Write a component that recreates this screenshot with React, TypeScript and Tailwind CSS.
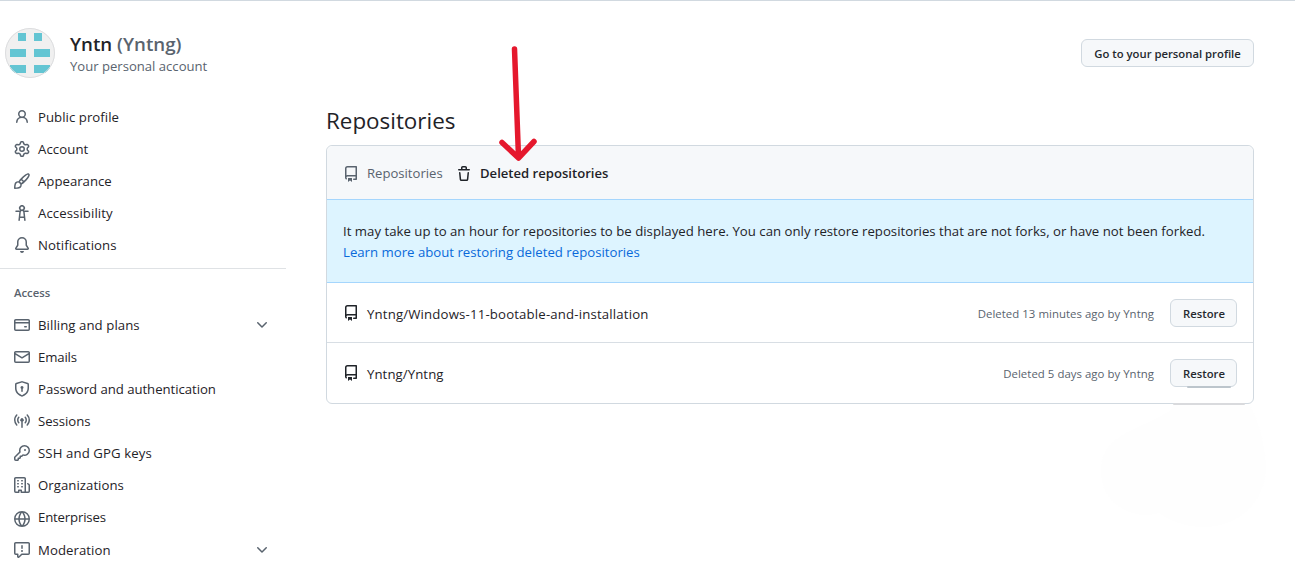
import type { ReactNode } from "react";

const ICONS = {
  person: "M10.561 8.073a6.005 6.005 0 0 1 3.432 5.142.75.75 0 1 1-1.498.07 4.5 4.5 0 0 0-8.99 0 .75.75 0 0 1-1.498-.07 6.004 6.004 0 0 1 3.431-5.142 3.999 3.999 0 1 1 5.123 0ZM10.5 5a2.5 2.5 0 1 0-5 0 2.5 2.5 0 0 0 5 0Z",
  gear: "M8 0a8.2 8.2 0 0 1 .701.031C9.444.095 9.99.645 10.16 1.29l.288 1.107c.018.066.079.158.212.224.231.114.454.243.668.386.123.082.233.09.299.071l1.103-.303c.644-.176 1.392.021 1.82.63.27.385.506.792.704 1.218.315.675.111 1.422-.364 1.891l-.814.806c-.049.048-.098.147-.088.294.016.257.016.515 0 .772-.01.147.038.246.088.294l.814.806c.475.469.679 1.216.364 1.891a7.977 7.977 0 0 1-.704 1.217c-.428.61-1.176.807-1.82.63l-1.102-.302c-.067-.019-.177-.011-.3.071a5.909 5.909 0 0 1-.668.386c-.133.066-.194.158-.211.224l-.29 1.106c-.168.646-.715 1.196-1.458 1.26a8.006 8.006 0 0 1-1.402 0c-.743-.064-1.289-.614-1.458-1.26l-.289-1.106c-.018-.066-.079-.158-.212-.224a5.738 5.738 0 0 1-.668-.386c-.123-.082-.233-.09-.299-.071l-1.103.303c-.644.176-1.392-.021-1.82-.63a8.12 8.12 0 0 1-.704-1.218c-.315-.675-.111-1.422.363-1.891l.815-.806c.05-.048.098-.147.088-.294a6.214 6.214 0 0 1 0-.772c.01-.147-.038-.246-.088-.294l-.815-.806C.635 6.045.431 5.298.746 4.623a7.92 7.92 0 0 1 .704-1.217c.428-.61 1.176-.807 1.82-.63l1.102.302c.067.019.177.011.3-.071.214-.143.437-.272.668-.386.133-.066.194-.158.211-.224l.29-1.106C6.009.645 6.556.095 7.299.03 7.53.01 7.764 0 8 0Zm-.571 1.525c-.036.003-.108.036-.137.146l-.289 1.105c-.147.561-.549.967-.998 1.189-.173.086-.34.183-.5.29-.417.278-.97.423-1.529.27l-1.103-.303c-.109-.03-.175.016-.195.045-.22.312-.412.644-.573.99-.014.031-.021.11.059.19l.815.806c.411.406.562.957.53 1.456a4.709 4.709 0 0 0 0 .582c.032.499-.119 1.05-.53 1.456l-.815.806c-.081.08-.073.159-.059.19.162.346.353.677.573.989.02.03.085.076.195.046l1.102-.303c.56-.153 1.113-.008 1.53.27.161.107.328.204.501.29.447.222.85.629.997 1.189l.289 1.105c.029.109.101.143.137.146a6.6 6.6 0 0 0 1.142 0c.036-.003.108-.036.137-.146l.289-1.105c.147-.561.549-.967.998-1.189.173-.086.34-.183.5-.29.417-.278.97-.423 1.529-.27l1.103.303c.109.029.175-.016.195-.045.22-.313.411-.644.573-.99.014-.031.021-.11-.059-.19l-.815-.806c-.411-.406-.562-.957-.53-1.456a4.709 4.709 0 0 0 0-.582c-.032-.499.119-1.05.53-1.456l.815-.806c.081-.08.073-.159.059-.19a6.464 6.464 0 0 0-.573-.989c-.02-.03-.085-.076-.195-.046l-1.102.303c-.56.153-1.113.008-1.53-.27a4.44 4.44 0 0 0-.501-.29c-.447-.222-.85-.629-.997-1.189l-.289-1.105c-.029-.11-.101-.143-.137-.146a6.6 6.6 0 0 0-1.142 0ZM11 8a3 3 0 1 1-6 0 3 3 0 0 1 6 0ZM9.5 8a1.5 1.5 0 1 0-3.001.001A1.5 1.5 0 0 0 9.5 8Z",
  brush: "M11.134 1.535c.7-.509 1.416-.942 2.076-1.155.649-.21 1.463-.267 2.069.34.603.601.568 1.411.368 2.07-.202.668-.624 1.39-1.125 2.096-1.011 1.424-2.496 2.987-3.775 4.249-1.098 1.084-2.132 1.839-3.04 2.3a3.744 3.744 0 0 1-1.055 3.217c-.431.431-1.065.691-1.657.861-.614.177-1.294.287-1.914.357A21.151 21.151 0 0 1 .797 16H.743l.007-.75H.749L.742 16a.75.75 0 0 1-.743-.742l.743-.008-.742.007v-.054a21.25 21.25 0 0 1 .13-2.284c.067-.647.187-1.287.358-1.914.17-.591.43-1.226.86-1.657a3.746 3.746 0 0 1 3.227-1.054c.466-.893 1.225-1.907 2.314-2.982 1.271-1.255 2.833-2.75 4.245-3.777ZM1.62 13.089c-.051.464-.086.929-.104 1.395.466-.018.932-.053 1.396-.104a10.511 10.511 0 0 0 1.668-.309c.526-.151.856-.325 1.011-.48a2.25 2.25 0 1 0-3.182-3.182c-.155.155-.329.485-.48 1.01a10.515 10.515 0 0 0-.309 1.67Zm10.396-10.34c-1.224.89-2.605 2.189-3.822 3.384l1.718 1.718c1.21-1.205 2.51-2.597 3.387-3.833.47-.662.78-1.227.912-1.662.134-.444.032-.551.009-.575h-.001V1.78c-.014-.014-.113-.113-.548.027-.432.14-.995.462-1.655.942Zm-4.832 7.266-.001.001a9.859 9.859 0 0 0 1.63-1.142L7.155 7.216a9.7 9.7 0 0 0-1.161 1.607c.482.302.889.71 1.19 1.192Z",
  accessibility: "M9.923 5.302c.063.063.122.129.178.198H14A.75.75 0 0 1 14 7h-3.3l.578 5.163.362 2.997a.75.75 0 0 1-1.49.18L9.868 13H6.132l-.282 2.34a.75.75 0 0 1-1.49-.18l.362-2.997L5.3 7H2a.75.75 0 0 1 0-1.5h3.9a2.54 2.54 0 0 1 .176-.198 3 3 0 1 1 3.847 0ZM9.2 7.073h-.001a1.206 1.206 0 0 0-2.398 0L6.305 11.5h3.39ZM9.5 3a1.5 1.5 0 1 0-3.001.001A1.5 1.5 0 0 0 9.5 3Z",
  bell: "M8 16a2 2 0 0 0 1.985-1.75c.017-.137-.097-.25-.235-.25h-3.5c-.138 0-.252.113-.235.25A2 2 0 0 0 8 16ZM3 5a5 5 0 0 1 10 0v2.947c0 .05.015.098.042.139l1.703 2.555A1.519 1.519 0 0 1 13.482 13H2.518a1.516 1.516 0 0 1-1.263-2.36l1.703-2.554A.255.255 0 0 0 3 7.947Zm5-3.5A3.5 3.5 0 0 0 4.5 5v2.947c0 .346-.102.683-.294.97l-1.703 2.556a.017.017 0 0 0-.003.01l.001.006c0 .002.002.004.004.006l.006.004.007.001h10.964l.007-.001.006-.004.004-.006.001-.007a.017.017 0 0 0-.003-.01l-1.703-2.554a1.745 1.745 0 0 1-.294-.97V5A3.5 3.5 0 0 0 8 1.5Z",
  card: "M10.75 9a.75.75 0 0 0 0 1.5h1.5a.75.75 0 0 0 0-1.5h-1.5ZM0 3.75C0 2.784.784 2 1.75 2h12.5c.966 0 1.75.784 1.75 1.75v8.5A1.75 1.75 0 0 1 14.25 14H1.75A1.75 1.75 0 0 1 0 12.25ZM14.5 6.5h-13v5.75c0 .138.112.25.25.25h12.5a.25.25 0 0 0 .25-.25Zm0-2.75a.25.25 0 0 0-.25-.25H1.75a.25.25 0 0 0-.25.25V5h13Z",
  mail: "M1.75 2h12.5c.966 0 1.75.784 1.75 1.75v8.5A1.75 1.75 0 0 1 14.25 14H1.75A1.75 1.75 0 0 1 0 12.25v-8.5C0 2.784.784 2 1.75 2ZM1.5 12.251c0 .138.112.25.25.25h12.5a.25.25 0 0 0 .25-.25V5.809L8.38 9.397a.75.75 0 0 1-.76 0L1.5 5.809v6.442Zm13-8.181v-.32a.25.25 0 0 0-.25-.25H1.75a.25.25 0 0 0-.25.25v.32L8 7.88Z",
  shield: "m8.533.133 5.25 1.68A1.75 1.75 0 0 1 15 3.48V7c0 1.566-.32 3.182-1.303 4.682-.983 1.498-2.585 2.813-5.032 3.855a1.697 1.697 0 0 1-1.33 0c-2.447-1.042-4.049-2.357-5.032-3.855C1.32 10.182 1 8.566 1 7V3.48a1.755 1.755 0 0 1 1.217-1.667l5.25-1.68a1.748 1.748 0 0 1 1.066 0Zm-.61 1.429.001.001-5.25 1.68a.251.251 0 0 0-.174.237V7c0 1.36.275 2.666 1.057 3.859.784 1.194 2.121 2.342 4.366 3.298a.196.196 0 0 0 .154 0c2.245-.957 3.582-2.103 4.366-3.297C13.225 9.666 13.5 8.358 13.5 7V3.48a.25.25 0 0 0-.174-.238l-5.25-1.68a.25.25 0 0 0-.153 0ZM9.5 6.5c0 .536-.286 1.032-.75 1.3v2.45a.75.75 0 0 1-1.5 0V7.8A1.5 1.5 0 1 1 9.5 6.5Z",
  broadcast: "M8.75 8.582v5.668a.75.75 0 0 1-1.5 0V8.582a1.75 1.75 0 1 1 1.5 0Zm3.983-7.125a.75.75 0 0 1 1.06.026A7.976 7.976 0 0 1 16 7c0 2.139-.84 4.083-2.207 5.517a.75.75 0 1 1-1.086-1.034A6.474 6.474 0 0 0 14.5 7a6.474 6.474 0 0 0-1.793-4.483.75.75 0 0 1 .026-1.06Zm-9.466 0c.3.286.312.76.026 1.06A6.474 6.474 0 0 0 1.5 7a6.47 6.47 0 0 0 1.793 4.483.75.75 0 0 1-1.086 1.034A7.973 7.973 0 0 1 0 7c0-2.139.84-4.083 2.207-5.517a.75.75 0 0 1 1.06-.026Zm8.556 2.321A4.988 4.988 0 0 1 13 7a4.988 4.988 0 0 1-1.177 3.222.75.75 0 1 1-1.146-.967A3.487 3.487 0 0 0 11.5 7c0-.86-.309-1.645-.823-2.255a.75.75 0 0 1 1.146-.967Zm-6.492.958A3.48 3.48 0 0 0 4.5 7a3.48 3.48 0 0 0 .823 2.255.75.75 0 0 1-1.146.967A4.981 4.981 0 0 1 3 7a4.982 4.982 0 0 1 1.188-3.236.75.75 0 1 1 1.143.972Z",
  key: "M10.5 0a5.499 5.499 0 1 1-1.288 10.848l-.932.932a.749.749 0 0 1-.53.22H7v.75a.749.749 0 0 1-.22.53l-.5.5a.749.749 0 0 1-.53.22H5v.75a.749.749 0 0 1-.22.53l-.5.5a.749.749 0 0 1-.53.22h-2A1.75 1.75 0 0 1 0 14.25v-2c0-.199.079-.389.22-.53l4.932-4.932A5.5 5.5 0 0 1 10.5 0Zm-4 5.5c-.001.431.069.86.205 1.269a.75.75 0 0 1-.181.768L1.5 12.56v1.69c0 .138.112.25.25.25h1.69l.06-.06v-1.19a.75.75 0 0 1 .75-.75h1.19l.06-.06v-1.19a.75.75 0 0 1 .75-.75h1.19l1.023-1.025a.75.75 0 0 1 .768-.18A4 4 0 1 0 6.5 5.5ZM11 6a1 1 0 1 1 0-2 1 1 0 0 1 0 2Z",
  org: "M1.75 16A1.75 1.75 0 0 1 0 14.25V1.75C0 .784.784 0 1.75 0h8.5C11.216 0 12 .784 12 1.75v12.5c0 .085-.006.168-.018.25h2.268a.25.25 0 0 0 .25-.25V8.285a.25.25 0 0 0-.111-.208l-1.055-.703a.749.749 0 1 1 .832-1.248l1.055.703c.487.325.779.871.779 1.456v5.965A1.75 1.75 0 0 1 14.25 16h-3.5a.766.766 0 0 1-.197-.026c-.099.017-.2.026-.303.026h-3a.75.75 0 0 1-.75-.75V14h-1v1.25a.75.75 0 0 1-.75.75Zm-.25-1.75c0 .138.112.25.25.25H4v-1.25a.75.75 0 0 1 .75-.75h2.5a.75.75 0 0 1 .75.75v1.25h2.25a.25.25 0 0 0 .25-.25V1.75a.25.25 0 0 0-.25-.25h-8.5a.25.25 0 0 0-.25.25ZM3.75 6h.5a.75.75 0 0 1 0 1.5h-.5a.75.75 0 0 1 0-1.5ZM3 3.75A.75.75 0 0 1 3.75 3h.5a.75.75 0 0 1 0 1.5h-.5A.75.75 0 0 1 3 3.75Zm4 3A.75.75 0 0 1 7.75 6h.5a.75.75 0 0 1 0 1.5h-.5A.75.75 0 0 1 7 6.75ZM7.75 3h.5a.75.75 0 0 1 0 1.5h-.5a.75.75 0 0 1 0-1.5ZM3 9.75A.75.75 0 0 1 3.75 9h.5a.75.75 0 0 1 0 1.5h-.5A.75.75 0 0 1 3 9.75ZM7.75 9h.5a.75.75 0 0 1 0 1.5h-.5a.75.75 0 0 1 0-1.5Z",
  globe: "M8 0a8 8 0 1 1 0 16A8 8 0 0 1 8 0ZM5.78 8.75a9.64 9.64 0 0 0 1.363 4.177c.255.426.542.832.857 1.215.245-.296.551-.705.857-1.215A9.64 9.64 0 0 0 10.22 8.75Zm4.44-1.5a9.64 9.64 0 0 0-1.363-4.177c-.307-.51-.612-.919-.857-1.215a9.927 9.927 0 0 0-.857 1.215A9.64 9.64 0 0 0 5.78 7.25Zm-5.944 1.5H1.543a6.507 6.507 0 0 0 4.666 5.5c-.123-.181-.24-.365-.352-.552-.715-1.192-1.437-2.874-1.581-4.948Zm-2.733-1.5h2.733c.144-2.074.866-3.756 1.58-4.948.12-.197.237-.381.353-.552a6.507 6.507 0 0 0-4.666 5.5Zm10.181 1.5c-.144 2.074-.866 3.756-1.58 4.948-.12.197-.237.381-.353.552a6.507 6.507 0 0 0 4.666-5.5Zm2.733-1.5a6.507 6.507 0 0 0-4.666-5.5c.123.181.24.365.353.552.714 1.192 1.436 2.874 1.58 4.948Z",
  report: "M0 1.75C0 .784.784 0 1.75 0h12.5C15.216 0 16 .784 16 1.75v9.5A1.75 1.75 0 0 1 14.25 13H8.06l-2.573 2.573A1.458 1.458 0 0 1 3 14.543V13H1.75A1.75 1.75 0 0 1 0 11.25Zm1.75-.25a.25.25 0 0 0-.25.25v9.5c0 .138.112.25.25.25h2a.75.75 0 0 1 .75.75v2.19l2.72-2.72a.749.749 0 0 1 .53-.22h6.5a.25.25 0 0 0 .25-.25v-9.5a.25.25 0 0 0-.25-.25Zm7 2.25v2.5a.75.75 0 0 1-1.5 0v-2.5a.75.75 0 0 1 1.5 0ZM9 9a1 1 0 1 1-2 0 1 1 0 0 1 2 0Z",
  chevron: "M12.78 5.22a.749.749 0 0 1 0 1.06l-4.25 4.25a.749.749 0 0 1-1.06 0L3.22 6.28a.749.749 0 1 1 1.06-1.06L8 8.939l3.72-3.719a.749.749 0 0 1 1.06 0Z",
  repo: "M2 2.5A2.5 2.5 0 0 1 4.5 0h8.75a.75.75 0 0 1 .75.75v12.5a.75.75 0 0 1-.75.75h-2.5a.75.75 0 0 1 0-1.5h1.75v-2h-8a1 1 0 0 0-.714 1.7.75.75 0 1 1-1.072 1.05A2.495 2.495 0 0 1 2 11.5Zm10.5-1h-8a1 1 0 0 0-1 1v6.708A2.486 2.486 0 0 1 4.5 9h8ZM5 12.25a.25.25 0 0 1 .25-.25h3.5a.25.25 0 0 1 .25.25v3.25a.25.25 0 0 1-.4.2l-1.45-1.087a.249.249 0 0 0-.3 0L5.4 15.7a.25.25 0 0 1-.4-.2Z",
  trash: "M11 1.75V3h2.25a.75.75 0 0 1 0 1.5H2.75a.75.75 0 0 1 0-1.5H5V1.75C5 .784 5.784 0 6.75 0h2.5C10.216 0 11 .784 11 1.75ZM4.496 6.675l.66 6.6a.25.25 0 0 0 .249.225h5.19a.25.25 0 0 0 .249-.225l.66-6.6a.75.75 0 0 1 1.492.149l-.66 6.6A1.748 1.748 0 0 1 10.595 15h-5.19a1.75 1.75 0 0 1-1.741-1.575l-.66-6.6a.75.75 0 1 1 1.492-.15ZM6.5 1.75V3h3V1.75a.25.25 0 0 0-.25-.25h-2.5a.25.25 0 0 0-.25.25Z",
};

type IconName = keyof typeof ICONS;

function Icon({ name, className = "" }: { name: IconName; className?: string }) {
  return (
    <svg viewBox="0 0 16 16" className={`size-4 shrink-0 fill-current ${className}`} aria-hidden="true">
      <path d={ICONS[name]} />
    </svg>
  );
}

type Item = { icon: IconName; label: string; tracking?: string; more?: boolean; iconClass?: string; rowClass?: string };

const ACCOUNT_ITEMS: Item[] = [
  { icon: "person", label: "Public profile", tracking: "tracking-[0.04px]" },
  { icon: "gear", label: "Account", tracking: "tracking-[0.08px]" },
  { icon: "brush", label: "Appearance" },
  { icon: "accessibility", label: "Accessibility", tracking: "tracking-[0.08px]" },
  { icon: "bell", label: "Notifications", tracking: "tracking-[0.07px]" },
];

const ACCESS_ITEMS: Item[] = [
  { icon: "card", label: "Billing and plans", tracking: "tracking-[0.07px]", more: true },
  { icon: "mail", label: "Emails", tracking: "tracking-[-0.15px]" },
  { icon: "shield", label: "Password and authentication", tracking: "tracking-[-0.05px]" },
  { icon: "broadcast", label: "Sessions", tracking: "tracking-[-0.05px]" },
  { icon: "key", label: "SSH and GPG keys", tracking: "tracking-[0.1px]" },
  { icon: "org", label: "Organizations", tracking: "tracking-[0.04px]" },
  { icon: "globe", label: "Enterprises", tracking: "tracking-[-0.17px]", iconClass: "mt-[3px]" },
  { icon: "report", label: "Moderation", tracking: "tracking-[0.05px]", more: true, rowClass: "mt-px" },
];

function NavItem({ icon, label, tracking = "", more, iconClass = "", rowClass = "" }: Item) {
  return (
    <li className={`flex h-8 items-center pr-4 pl-3.5 ${rowClass}`}>
      <Icon name={icon} className={`text-[#59636e] ${iconClass}`} />
      <span className={`ml-2 grow text-[13.2px] leading-5 ${tracking}`}>{label}</span>
      {more && <Icon name="chevron" className="text-[#59636e]" />}
    </li>
  );
}

function Button({ children, className = "" }: { children: ReactNode; className?: string }) {
  return (
    <button className={`h-7 shrink-0 rounded-md border border-[#d1d9e0] bg-[#f6f8fa] pt-0.5 text-[11.3px] leading-5 font-semibold text-[#25292e] ${className}`}>
      {children}
    </button>
  );
}

function RepoRow({ name, deleted, tracking = "", last }: { name: string; deleted: string; tracking?: string; last?: boolean }) {
  return (
    <div className={`flex h-[60px] items-center border-b px-4 ${last ? "border-transparent" : "border-[#d8dee4]"}`}>
      <Icon name="repo" className="mt-px" />
      <span className={`mt-[3px] ml-2 grow text-[13.2px] leading-5 ${tracking}`}>{name}</span>
      <span className="mt-[3px] mr-4 text-[11.4px] leading-[18px] tracking-[0.04px] text-[#59636e]">{deleted}</span>
      <div className="relative mt-px flex">
        <Button className="w-[67px] pl-px">Restore</Button>
        {last && <span className="absolute right-1.5 -bottom-px h-0.5 w-11 rounded-full bg-[#bcc5cc]" />}
      </div>
    </div>
  );
}

function Avatar() {
  return (
    <svg viewBox="0 0 50 50" className="size-[50px] shrink-0">
      <clipPath id="avatar-clip">
        <circle cx="25" cy="25" r="25" />
      </clipPath>
      <g clipPath="url(#avatar-clip)">
        <path d="M0 0h50v50H0z" fill="#f0f0f0" />
        <path d="M13 5h8v8h-8zM29 5h8v8h-8zM5 21h16v8H5zM29 21h16v8H29zM5 37h16v8H5zM29 37h16v8H29z" fill="#63c5d3" />
      </g>
      <circle cx="25" cy="25" r="24.5" fill="none" stroke="#dcdddf" />
    </svg>
  );
}

export default function App() {
  return (
    <div className="relative h-[572px] overflow-hidden border-t border-[#d1d9e0] bg-white font-['Open_Sans','Noto_Sans',sans-serif] text-[#1f2328]">
      <svg className="absolute top-0 left-0 h-[571px] w-[1295px]" viewBox="0 1 1295 571">
        <path d="M1173 404h76c10 16 16 42 17 62 0 35-27 61-62 61-18 0-34-6-45-14-27 8-58-10-58-42 0-36 38-42 64-57 5-3 8-6 8-10Z" fill="#fefefe" />
      </svg>

      <header className="flex h-[88px] items-start pt-[27px] pr-[41px] pl-[5px]">
        <Avatar />
        <div className="ml-[15px] grow pt-1">
          <h1 className="text-[18.7px] leading-6 font-semibold">
            Yntn <span className="text-[#59636e]">(Yntng)</span>
          </h1>
          <p className="text-[13.1px] leading-5 text-[#59636e]">Your personal account</p>
        </div>
        <Button className="mt-[11px] w-[173px]">Go to your personal profile</Button>
      </header>

      <div className="relative flex">
        <nav className="w-[286px] pt-3">
          <ul>
            {ACCOUNT_ITEMS.map((item) => (
              <NavItem key={item.label} {...item} />
            ))}
          </ul>
          <div className="mt-[7px] border-t border-[#dfe2e5]" />
          <h2 className="mt-[15px] mb-[7px] h-[18px] pl-3.5 text-[11.3px] leading-[18px] font-semibold text-[#59636e]">Access</h2>
          <ul>
            {ACCESS_ITEMS.map((item) => (
              <NavItem key={item.label} {...item} />
            ))}
          </ul>
        </nav>

        <main className="ml-10 w-[928px] pt-4">
          <h2 className="h-10 text-[22.4px] leading-8">Repositories</h2>
          <section className="relative rounded-md border border-[#d1d9e0]">
            <div className="flex h-[53px] items-center rounded-t-md bg-[#f6f8fa] px-4">
              <Icon name="repo" className="mt-[3px] text-[#59636e]" />
              <span className="mt-px ml-2 w-[75px] text-[13.1px] leading-5 whitespace-nowrap text-[#59636e]">Repositories</span>
              <Icon name="trash" className="mt-[3px] ml-3.5" />
              <span className="mt-px ml-2 text-[13.1px] leading-5 font-semibold">Deleted repositories</span>
            </div>
            <div className="h-[84px] border-y border-[#a5d6fd] bg-[#ddf4ff] px-4 pt-[21px] text-[13.2px] leading-[21px]">
              <p className="tracking-[0.012px]">
                It may take up to an hour for repositories to be displayed here. You can only restore repositories that are not forks, or have not been
                forked.
              </p>
              <a className="text-[#0969da]">Learn more about restoring deleted repositories</a>
            </div>
            <RepoRow name="Yntng/Windows-11-bootable-and-installation" deleted="Deleted 13 minutes ago by Yntng" tracking="tracking-[0.17px]" />
            <RepoRow name="Yntng/Yntng" deleted="Deleted 5 days ago by Yntng" tracking="tracking-[0.08px]" last />
            <span className="absolute right-2 -bottom-0.5 h-0.5 w-[72px] rounded-full bg-[#d9dadd]" />
          </section>
        </main>
      </div>

      <svg className="absolute top-[39px] left-[490px] h-[130px] w-[60px]" viewBox="490 40 60 130" fill="none" stroke="#e5182d" strokeWidth="5.5" strokeLinecap="round" strokeLinejoin="round">
        <path d="M514.5 49 518.5 157M502 142.5 518.5 158 534 141.5" />
      </svg>
    </div>
  );
}
